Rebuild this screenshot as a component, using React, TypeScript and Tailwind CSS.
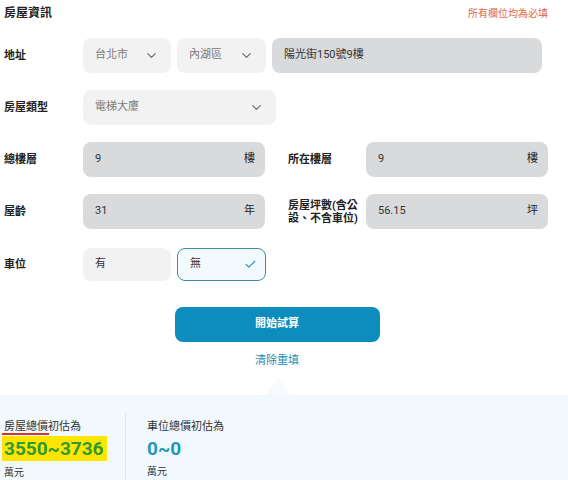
import { ChevronDown, Check } from "lucide-react";

const font = { fontFamily: "Roboto, 'Noto Sans CJK TC', sans-serif" };

function Select({ value, className }: { value: string; className: string }) {
  return (
    <div
      className={`flex h-[35px] items-center justify-between rounded-lg bg-[#f2f2f3] pl-3 pr-3 text-[11px] text-[#7a7a7a] ${className}`}
    >
      <span>{value}</span>
      <ChevronDown className="h-[15px] w-[15px] text-[#666]" strokeWidth={1.8} />
    </div>
  );
}

function UnitInput({ value, unit }: { value: string; unit: string }) {
  return (
    <div className="flex h-[35px] w-[182px] items-center justify-between rounded-lg bg-[#d9dadb] pl-3 pr-[10px] text-[11px] text-[#333]">
      <span>{value}</span>
      <span className="text-[#222]">{unit}</span>
    </div>
  );
}

function Label({ children, className = "" }: { children: React.ReactNode; className?: string }) {
  return (
    <div className={`shrink-0 text-[11px] font-bold leading-[13px] text-[#222] ${className}`}>
      {children}
    </div>
  );
}

export default function App() {
  return (
    <div className="h-[480px] w-[568px] overflow-hidden bg-white" style={font}>
      {/* Form */}
      <div className="pl-1 pr-5">
        <div className="flex items-center justify-between pt-[4px]">
          <h1 className="text-[12px] font-bold text-[#222]">房屋資訊</h1>
          <span className="text-[10px] text-[#e0674e]">所有欄位均為必填</span>
        </div>

        <div className="mt-[16px] flex flex-col gap-[17px]">
          <div className="flex items-center">
            <Label className="w-[79px]">地址</Label>
            <div className="flex gap-[6px]">
              <Select value="台北市" className="w-[88px]" />
              <Select value="內湖區" className="w-[89px]" />
              <div className="flex h-[35px] w-[270px] items-center rounded-lg bg-[#d9dadb] pl-3 text-[11px] text-[#333]">
                陽光街150號9樓
              </div>
            </div>
          </div>

          <div className="flex items-center">
            <Label className="w-[79px]">房屋類型</Label>
            <Select value="電梯大廈" className="w-[193px]" />
          </div>

          <div className="flex items-center">
            <Label className="w-[79px]">總樓層</Label>
            <UnitInput value="9" unit="樓" />
            <Label className="ml-[23px] w-[78px]">所在樓層</Label>
            <UnitInput value="9" unit="樓" />
          </div>

          <div className="flex items-center">
            <Label className="w-[79px]">屋齡</Label>
            <UnitInput value="31" unit="年" />
            <Label className="ml-[23px] w-[78px]">
              房屋坪數(含公
              <br />
              設、不含車位)
            </Label>
            <UnitInput value="56.15" unit="坪" />
          </div>

          <div className="mt-[2px] flex items-center">
            <Label className="w-[79px]">車位</Label>
            <div className="flex gap-[6px]">
              <div className="flex h-[33px] w-[88px] items-center rounded-lg bg-[#f2f2f3] pl-3 text-[11px] text-[#333]">
                有
              </div>
              <div className="flex h-[33px] w-[89px] items-center justify-between rounded-lg border border-[#3a8fa6] bg-[#f2fafd] pl-3 pr-2 text-[11px] text-[#333]">
                <span>無</span>
                <Check className="h-[13px] w-[13px] text-[#2c8fb3]" strokeWidth={2} />
              </div>
            </div>
          </div>
        </div>

        <div className="mt-[26px] flex flex-col items-center pl-[2px]">
          <button className="h-[35px] w-[205px] rounded-lg bg-[#0c8dbd] text-[11px] font-bold text-white">
            開始試算
          </button>
          <button className="mt-[11px] text-[11px] text-[#1b8db5]">清除重填</button>
        </div>
      </div>

      {/* Result */}
      <div className="relative mt-[25px] h-[120px] bg-[#f1f9fd]">
        <div className="absolute left-[266px] top-[-18px] h-0 w-0 border-x-[12px] border-b-[18px] border-x-transparent border-b-[#f4fafd]" />
        <div className="flex pt-[24px]">
          <div className="w-[125px] pl-1">
            <div className="relative text-[11px] text-[#333]">
              房屋總價初估為
              <div className="absolute left-[-2px] top-[14px] h-[2px] w-[47px] bg-[#d9302a]" />
            </div>
            <div className="mt-[1px] ml-[-2px] inline-block bg-[#ffe600] pl-[2px] pr-[3px] text-[19px] font-bold leading-[25px] text-[#2d9a37]">
              3550~3736
            </div>
            <div className="mt-[3px] text-[10px] text-[#333]">萬元</div>
          </div>
          <div className="mt-[-6px] w-px self-stretch bg-[#e1e8ec]" />
          <div className="pl-[21px]">
            <div className="text-[11px] text-[#333]">車位總價初估為</div>
            <div className="mt-[1px] text-[19px] font-bold leading-[25px] text-[#1e9ab8]">0~0</div>
            <div className="mt-[3px] text-[10px] text-[#333]">萬元</div>
          </div>
        </div>
      </div>
    </div>
  );
}
